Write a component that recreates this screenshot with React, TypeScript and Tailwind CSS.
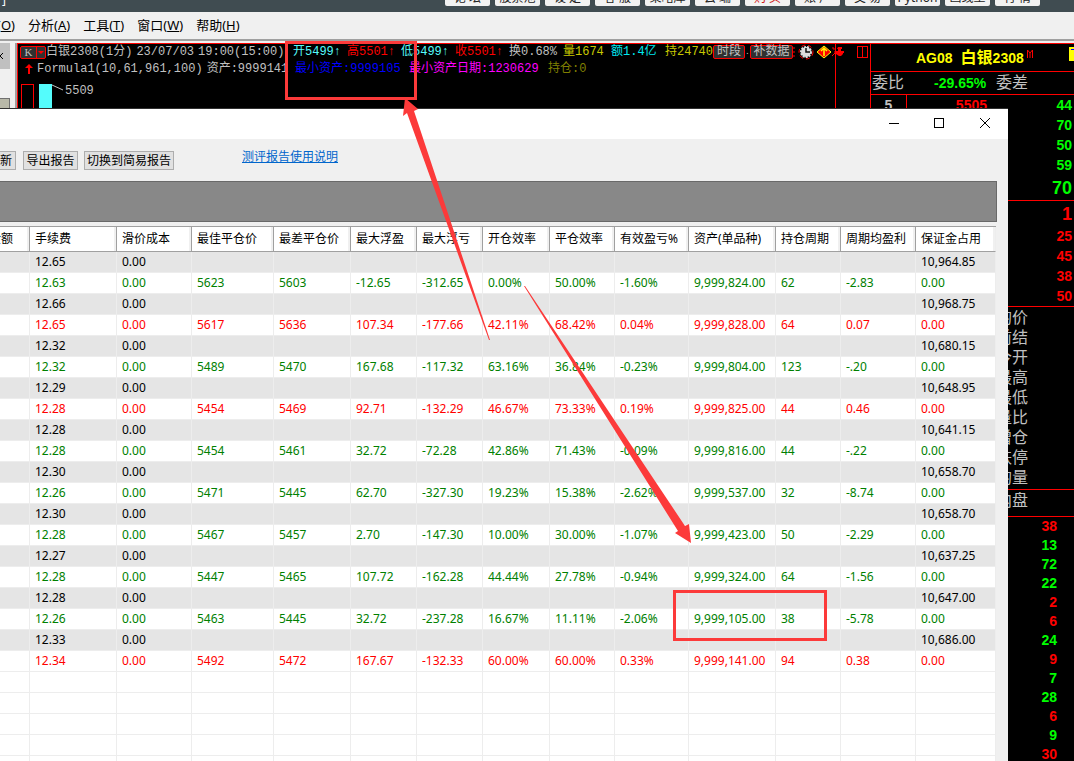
import React from "react";

interface Trade {
  cost: string;
  margin: string;
  closeCost: string;
  tone: "up" | "down";
  values: string[];
}

interface DepthRow {
  level?: string;
  price?: string;
  value: string;
  large?: boolean;
}

const uiFont = "font-['Noto_Sans','Noto_Sans_CJK_SC',sans-serif]";
const quoteFont = "font-['Liberation_Mono','Noto_Sans_CJK_SC',monospace]";
const boardFont = "font-['Liberation_Sans','Noto_Sans_CJK_SC',sans-serif]";

const topButtons = [
  "论 坛", "股票池", "设 定", "客 服", "策略库", "云 端",
  "购 买", "账 户", "交 易", "Python", "画线王", "行 情",
];

const menus = [
  { label: "分析", hotkey: "A" },
  { label: "工具", hotkey: "T" },
  { label: "窗口", hotkey: "W" },
  { label: "帮助", hotkey: "H" },
];

const columns = [
  { title: "金额", width: "w-[30px]" },
  { title: "手续费", width: "w-[87px]" },
  { title: "滑价成本", width: "w-[75px]" },
  { title: "最佳平仓价", width: "w-[82px]" },
  { title: "最差平仓价", width: "w-[77px]" },
  { title: "最大浮盈", width: "w-[66px]" },
  { title: "最大浮亏", width: "w-[66px]" },
  { title: "开仓效率", width: "w-[67px]" },
  { title: "平仓效率", width: "w-[65px]" },
  { title: "有效盈亏%", width: "w-[74px]" },
  { title: "资产(单品种)", width: "w-[87px]" },
  { title: "持仓周期", width: "w-[65px]" },
  { title: "周期均盈利", width: "w-[75px]" },
  { title: "保证金占用", width: "w-auto" },
];

const trades: Trade[] = [
  { cost: "12.65", margin: "10,964.85", closeCost: "12.63", tone: "down", values: ["5623", "5603", "-12.65", "-312.65", "0.00%", "50.00%", "-1.60%", "9,999,824.00", "62", "-2.83"] },
  { cost: "12.66", margin: "10,968.75", closeCost: "12.65", tone: "up", values: ["5617", "5636", "107.34", "-177.66", "42.11%", "68.42%", "0.04%", "9,999,828.00", "64", "0.07"] },
  { cost: "12.32", margin: "10,680.15", closeCost: "12.32", tone: "down", values: ["5489", "5470", "167.68", "-117.32", "63.16%", "36.84%", "-0.23%", "9,999,804.00", "123", "-.20"] },
  { cost: "12.29", margin: "10,648.95", closeCost: "12.28", tone: "up", values: ["5454", "5469", "92.71", "-132.29", "46.67%", "73.33%", "0.19%", "9,999,825.00", "44", "0.46"] },
  { cost: "12.28", margin: "10,641.15", closeCost: "12.28", tone: "down", values: ["5454", "5461", "32.72", "-72.28", "42.86%", "71.43%", "-0.09%", "9,999,816.00", "44", "-.22"] },
  { cost: "12.30", margin: "10,658.70", closeCost: "12.26", tone: "down", values: ["5471", "5445", "62.70", "-327.30", "19.23%", "15.38%", "-2.62%", "9,999,537.00", "32", "-8.74"] },
  { cost: "12.30", margin: "10,658.70", closeCost: "12.28", tone: "down", values: ["5467", "5457", "2.70", "-147.30", "10.00%", "30.00%", "-1.07%", "9,999,423.00", "50", "-2.29"] },
  { cost: "12.27", margin: "10,637.25", closeCost: "12.28", tone: "down", values: ["5447", "5465", "107.72", "-162.28", "44.44%", "27.78%", "-0.94%", "9,999,324.00", "64", "-1.56"] },
  { cost: "12.28", margin: "10,647.00", closeCost: "12.26", tone: "down", values: ["5463", "5445", "32.72", "-237.28", "16.67%", "11.11%", "-2.06%", "9,999,105.00", "38", "-5.78"] },
  { cost: "12.33", margin: "10,686.00", closeCost: "12.34", tone: "up", values: ["5492", "5472", "167.67", "-132.33", "60.00%", "60.00%", "0.33%", "9,999,141.00", "94", "0.38"] },
];

const quotes = [
  { text: "开5499↑", style: "w-[54px] text-[#54fcfc]" },
  { text: "高5501↑", style: "w-[54px] text-[#ff0000]" },
  { text: "低5499↑", style: "w-[54px] text-[#54fcfc]" },
  { text: "收5501↑", style: "w-[54px] text-[#ff0000]" },
  { text: "换0.68%", style: "w-[54px] text-[#c0c0c0]" },
  { text: "量1674", style: "w-12 text-[#c8c800]" },
  { text: "额1.4亿", style: "w-[54px] text-[#00e8f0]" },
  { text: "持24740", style: "w-[48px] text-[#c8c800]" },
];

const asks: DepthRow[] = [
  { level: "5", price: "5505", value: "44" },
  { value: "70" },
  { value: "50" },
  { value: "59" },
  { value: "70", large: true },
];
const bids: DepthRow[] = [
  { value: "1", large: true },
  { value: "25" },
  { value: "45" },
  { value: "38" },
  { value: "50" },
];
const stats = ["均价", "前结", "今开", "最高", "最低", "量比", "增仓", "跌停", "均量"];
const ticks = [
  { value: "38", up: true }, { value: "13" }, { value: "72" }, { value: "22" },
  { value: "2", up: true }, { value: "6", up: true }, { value: "24" }, { value: "9", up: true },
  { value: "7" }, { value: "28" }, { value: "6", up: true }, { value: "9" }, { value: "30", up: true },
];

const TopBar = () => (
  <header className="flex h-3 items-end overflow-hidden bg-[#404c51] pb-[6px] pr-[34px] text-xs">
    <span className="ml-[2px] flex h-3 items-center text-white">]</span>
    <div className="ml-auto flex gap-[5px]">
      {topButtons.map((label) => (
        <button
          key={label}
          className={`h-4 w-[45px] shrink-0 rounded-[2px] bg-[#f2f2f2] text-center leading-4 whitespace-nowrap ${
            label === "购 买" ? "text-[#d01010]" : "text-[#222]"
          }`}
        >
          {label}
        </button>
      ))}
    </div>
  </header>
);

const MenuBar = () => (
  <nav className="flex h-[29px] items-center gap-[13px] border-b-2 border-[#a0a0a0] bg-[#f0f0f0] text-[13px] text-black">
    <button className="flex w-[15px] justify-end overflow-hidden whitespace-nowrap">
      选项(<u>O</u>)
    </button>
    {menus.map((menu) => (
      <button key={menu.hotkey} className="whitespace-nowrap">
        {menu.label}(<u>{menu.hotkey}</u>)
      </button>
    ))}
  </nav>
);

const SideStrip = () => (
  <aside className="flex h-[68px] w-[17px] shrink-0 flex-col justify-between border-r-2 border-[#a0a0a0] bg-[#f0f0f0]">
    <button className="h-[26px] w-[10px] bg-[#c0c0c0]" aria-label="关闭">
      <svg width="8" height="10" viewBox="0 0 8 10" stroke="#000" fill="none">
        <path d="M-3 2 L3 8 M3 2 L-3 8" />
      </svg>
    </button>
    <div className="h-[13px] w-[10px] border-t border-r border-[#707070] bg-[#b8b8a8]" />
  </aside>
);

const ToolIcons = () => (
  <svg width="78" height="16" viewBox="0 0 78 16" className="shrink-0">
    <g fill="none" stroke="#ff0000">
      <path d="M0 4 h2 M0 8 h2 M0 12 h2" />
      <circle cx="13" cy="8" r="7" strokeDasharray="4 3" />
      <path d="M39 4 h2 v2 M39 12 l3 -3 v-2" />
      <rect x="64.5" y="2.5" width="10" height="11" />
      <path d="M69.5 2 v12" />
    </g>
    <circle cx="13" cy="8" r="5" fill="#ddd" stroke="#ddd" strokeWidth="2" strokeDasharray="2 1" />
    <path d="M13 4 v4 h4" fill="none" stroke="#111" strokeWidth="1.5" />
    <path d="M31 2 l7 6 -7 6 -7 -6 z" fill="#ff0000" stroke="#ffff00" />
    <path d="M31 12 V4 M28 7 l3 -3 3 3" fill="none" stroke="#ffff00" strokeWidth="1.5" />
    <path d="M45 3 h4 v2 h-1 v2 h3 v2 h-1 v1 l-2 2 h-2 l-3 -2 v-1 h-1 v-2 h3 v-2 h-1 z" fill="#ff0000" />
  </svg>
);

const ChartPanel = () => (
  <section className={`relative min-w-0 flex-1 overflow-hidden border-t border-l border-[#ff0000] bg-black text-xs whitespace-nowrap text-[#c0c0c0] ${quoteFont}`}>
    <div className="flex h-4 items-center pl-[2px] leading-4">
      <button className="flex h-[13px] w-[26px] shrink-0 items-center rounded-[2px] border border-[#ff0000] bg-[#303030] font-['Liberation_Serif',serif] text-[11px] leading-3">
        <span className="w-4 border-r border-[#ff0000]">K</span>
        <svg width="8" height="8" viewBox="0 0 8 8">
          <path d="M1 3 h6 l-3 3 z" fill="#ff0000" />
        </svg>
      </button>
      <div className="flex w-[247px] shrink-0 gap-1">
        <span>白银2308(1分)</span>
        <span>23/07/03</span>
        <span>19:00(15:00)</span>
      </div>
      {quotes.map((quote) => (
        <span key={quote.text} className={`shrink-0 ${quote.style}`}>{quote.text}</span>
      ))}
      <button className="h-[14px] w-8 shrink-0 rounded-[2px] border border-[#ff0000] bg-[#303030] leading-3">时段</button>
      <span className="w-[5px] shrink-0 text-[8px]">.</span>
      <button className="h-[14px] w-[43px] shrink-0 rounded-[2px] border border-[#ff0000] bg-[#303030] leading-3">补数据</button>
      <ToolIcons />
    </div>
    <div className="flex h-[18px] items-center pl-[6px] leading-4">
      <svg width="13" height="10" viewBox="0 0 13 10" className="shrink-0">
        <path d="M5 0 l4 4 h-3 v6 h-2 v-6 h-3 z" fill="#ff0000" />
      </svg>
      <div className="flex w-[258px] shrink-0 gap-1">
        <span>Formula1(10,61,961,100)</span>
        <span>资产:9999141</span>
      </div>
      <span className="w-[114px] shrink-0 text-[#0000ff]">最小资产:9999105</span>
      <span className="w-[139px] shrink-0 text-[#ff00ff]">最小资产日期:1230629</span>
      <span className="text-[#808000]">持仓:0</span>
    </div>
    <div className="flex pt-[6px] pl-[3px]">
      <div className="h-8 w-[13px] border border-[#ff0000]" />
      <div className="ml-[5px] h-8 w-[13px] bg-[#54fcfc]" />
      <svg width="13" height="8" viewBox="0 0 13 8">
        <path d="M0 1 L11 6" stroke="#c0c0c0" />
      </svg>
      <span className="leading-[14px]">5509</span>
    </div>
    {/* cursor line over the chart */}
    <div className="absolute inset-y-0 right-[34px] w-px bg-[#ff0000]" />
  </section>
);

const DepthTable = ({ rows, color }: { rows: DepthRow[]; color: string }) => (
  <table className="w-full border-separate border-spacing-0 border-b border-[#ff0000]">
    <tbody>
      {rows.map((row, index) => (
        <tr key={index} className={row.large ? "h-[25px]" : "h-5"}>
          <td className="w-9 border-r border-[#ff0000] p-0 text-center leading-5 text-[#c0c0c0]">{row.level}</td>
          <td className="w-20 p-0 text-right leading-5 text-[#ff0000]">{row.price}</td>
          <td className={`p-0 pr-[2px] text-right leading-5 ${color} ${row.large ? "text-lg" : "text-sm"}`}>
            {row.value}
          </td>
        </tr>
      ))}
    </tbody>
  </table>
);

const QuoteBoard = () => (
  <aside className={`w-[204px] shrink-0 border-t border-l border-[#ff0000] bg-black text-sm font-bold whitespace-nowrap ${boardFont}`}>
    <div className="flex h-7 items-center border-b border-[#ff0000] pl-[45px] text-[#ffff00]">
      <span>AG08</span>
      <span className="ml-2 text-base">白银</span>
      <span>2308</span>
      <svg width="8" height="10" viewBox="0 0 8 10" className="mb-2 ml-[2px]">
        <path d="M1.5 9 V1 L4 4 L6.5 1 V9 M4 4 V9" fill="none" stroke="#ff0000" />
      </svg>
      <div className="mb-2 ml-auto h-[14px] w-[5px] border-t-2 border-[#ffff00] bg-[#ffff00]">
        <div className="ml-[2px] h-px bg-[#0000ff]" />
      </div>
    </div>
    <div className="flex h-[23px] items-center border-b border-[#ff0000] pl-px text-base font-normal text-[#c0c0c0]">
      <span>委比</span>
      <span className="ml-[30px] w-[62px] text-sm font-bold text-[#00ff00]">-29.65%</span>
      <span>委差</span>
    </div>
    <DepthTable rows={asks} color="text-[#00ff00]" />
    <DepthTable rows={bids} color="text-[#ff0000]" />
    <ul className="border-b border-[#ff0000] pt-px pb-px pl-[125px] text-base leading-5 font-normal text-[#c0c0c0]">
      {stats.map((label) => (
        <li key={label}>{label}</li>
      ))}
    </ul>
    <div className="h-[27px] border-b border-[#ff0000] pt-px pl-[125px] text-base leading-5 font-normal text-[#c0c0c0]">
      内盘
    </div>
    <ul className="pr-[17px] text-right leading-[19px]">
      {ticks.map((tick, index) => (
        <li key={index} className={tick.up ? "text-[#ff0000]" : "text-[#00ff00]"}>
          {tick.value}
        </li>
      ))}
    </ul>
  </aside>
);

const TitleBar = () => (
  <div className="flex h-[30px] items-center justify-end bg-white pb-[2px]">
    <button className="flex h-full w-[45px] items-center justify-center" aria-label="最小化">
      <svg width="10" height="10" viewBox="0 0 10 10"><path d="M0 5.5 H10" stroke="#000" /></svg>
    </button>
    <button className="flex h-full w-[46px] items-center justify-center" aria-label="最大化">
      <svg width="10" height="10" viewBox="0 0 10 10"><rect x=".5" y=".5" width="9" height="9" fill="none" stroke="#000" /></svg>
    </button>
    <button className="flex h-full w-[46px] items-center justify-center" aria-label="关闭窗口">
      <svg width="10" height="10" viewBox="0 0 10 10"><path d="M0 0 L10 10 M10 0 L0 10" stroke="#000" /></svg>
    </button>
  </div>
);

const cell = "h-[21px] overflow-hidden border-r border-b border-[#ededed] p-0 pl-[5px] leading-5 whitespace-nowrap";

const TradeTable = () => (
  <table className="w-full table-fixed border-separate border-spacing-0 text-left text-xs">
    <thead>
      <tr>
        {columns.map((column, index) => (
          <th
            key={column.title}
            className={`h-[25px] overflow-hidden border-r border-b border-[#a0a0a0] bg-white p-0 font-normal whitespace-nowrap last:border-r-[#ededed] ${column.width}`}
          >
            <div className={`border-r-2 border-[#f0f0f0] leading-6 ${index === 0 ? "flex justify-end pr-[14px]" : "pl-[5px]"}`}>
              {column.title}
            </div>
          </th>
        ))}
      </tr>
    </thead>
    <tbody>
      {trades.map((trade, index) => (
        <React.Fragment key={index}>
          <tr className="bg-[#e5e5e5] text-black">
            <td className={cell} />
            <td className={cell}>{trade.cost}</td>
            <td className={cell}>0.00</td>
            {trade.values.map((_, i) => (
              <td key={i} className={cell} />
            ))}
            <td className={cell}>{trade.margin}</td>
          </tr>
          <tr className={trade.tone === "up" ? "text-[#ff0000]" : "text-[#008000]"}>
            <td className={cell} />
            <td className={cell}>{trade.closeCost}</td>
            <td className={cell}>0.00</td>
            {trade.values.map((value, i) => (
              <td key={i} className={cell}>{value}</td>
            ))}
            <td className={cell}>0.00</td>
          </tr>
        </React.Fragment>
      ))}
      {[0, 1, 2, 3, 4].map((row) => (
        <tr key={row}>
          {columns.map((column) => (
            <td key={column.title} className={cell} />
          ))}
        </tr>
      ))}
    </tbody>
  </table>
);

const ReportWindow = () => (
  <section className="absolute top-[108px] right-[66px] bottom-0 left-0 overflow-hidden border-t border-[#303030] bg-[#f0f0f0] text-black">
    <TitleBar />
    <div className="flex h-[42px] items-start gap-[6px] pt-3 text-xs">
      <button className="flex h-[19px] w-4 items-center justify-end overflow-hidden border border-l-0 border-[#adadad] bg-[#e1e1e1] pr-[3px] whitespace-nowrap">
        刷新
      </button>
      <button className="ml-px h-[19px] w-[55px] border border-[#adadad] bg-[#e1e1e1] leading-4 whitespace-nowrap">导出报告</button>
      <button className="h-[19px] w-[90px] border border-[#adadad] bg-[#e1e1e1] leading-4 whitespace-nowrap">切换到简易报告</button>
      <a href="#" className="ml-[62px] leading-3 text-[#0066cc] underline">测评报告使用说明</a>
    </div>
    <div className="mr-[11px] h-[41px] border border-l-0 border-[#696969] bg-[#888]" />
    <div className="mt-1 mr-3 border-t border-[#a0a0a0] bg-white">
      <TradeTable />
    </div>
  </section>
);

const Annotations = () => (
  <svg className="pointer-events-none absolute inset-0 h-full w-full" fill="none" stroke="#fc3a3a" strokeWidth="3">
    <rect x="286.5" y="42.5" width="129" height="56" />
    <rect x="674.5" y="591.5" width="151" height="48" />
    <g fill="#fc3a3a" stroke="none">
      <path d="M405 98 L403 116 L407 113 L489 340 L490 340 L414 111 L418 109 Z" />
      <path d="M691 543 L675 533 L678 531 L524 286 L525 286 L685 526 L689 524 Z" />
    </g>
  </svg>
);

const App: React.FC = () => {
  return (
    <main className={`relative h-screen overflow-hidden bg-black ${uiFont}`}>
      <TopBar />
      <MenuBar />
      <div className="flex border-t-2 border-[#f0f0f0]">
        <SideStrip />
        <ChartPanel />
        <QuoteBoard />
      </div>
      <ReportWindow />
      <Annotations />
    </main>
  );
};

export default App;
